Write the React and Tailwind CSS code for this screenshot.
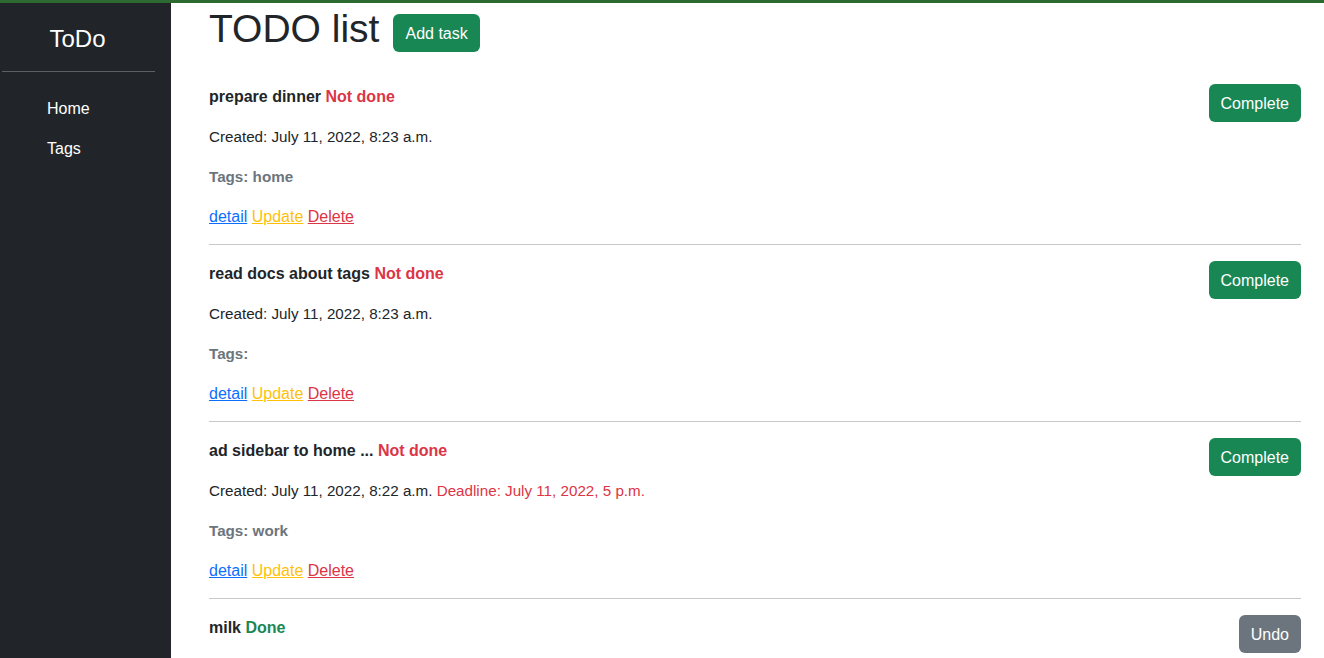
const tasks = [
  {
    name: 'prepare dinner',
    done: false,
    created: 'July 11, 2022, 8:23 a.m.',
    tags: 'home',
  },
  {
    name: 'read docs about tags',
    done: false,
    created: 'July 11, 2022, 8:23 a.m.',
    tags: '',
  },
  {
    name: 'ad sidebar to home ...',
    done: false,
    created: 'July 11, 2022, 8:22 a.m.',
    deadline: 'July 11, 2022, 5 p.m.',
    tags: 'work',
  },
  {
    name: 'milk',
    done: true,
    titleOnly: true,
  },
]

function Sidebar() {
  return (
    <aside className="w-[171px] shrink-0 bg-[#212529] text-white">
      <div className="w-[155px]">
        <div className="pt-[21px] text-center text-[24px] leading-[29px]">ToDo</div>
        <hr className="mt-[18px] ml-[2px] w-[153px] border-0 border-t border-[#5d6063]" />
        <ul className="mt-[25px] pl-[47px] text-[16px] leading-[24px]">
          <li className="h-[40px]">Home</li>
          <li className="h-[40px]">Tags</li>
        </ul>
      </div>
    </aside>
  )
}

function TaskItem({ task }) {
  return (
    <div>
      <div className="flex items-start justify-between">
        <div className="text-[16px] leading-[24px]">
          <p className="relative top-[1px] mb-[16px] font-bold text-[#212529]">
            {task.name}{' '}
            {task.done ? (
              <span className="text-[#198754]">Done</span>
            ) : (
              <span className="text-[#dc3545]">Not done</span>
            )}
          </p>
          {!task.titleOnly && (
            <>
              <p className="relative top-[1px] mb-[16px] text-[15.2px] text-[#212529]">
                Created: {task.created}
                {task.deadline && <span className="text-[#dc3545]"> Deadline: {task.deadline}</span>}
              </p>
              <p className="relative top-[1px] mb-[16px] text-[15.2px] font-bold text-[#6c757d]">
                Tags: {task.tags}
              </p>
              <p className="relative top-[1px] mb-[16px]">
                <a className="text-[#0d6efd] underline">detail</a>{' '}
                <a className="text-[#ffc107] underline">Update</a>{' '}
                <a className="text-[#dc3545] underline">Delete</a>
              </p>
            </>
          )}
        </div>
        {task.done ? (
          <button className="h-[38px] rounded-[6px] bg-[#6c757d] px-[12px] pt-[1px] text-[16px] text-white">Undo</button>
        ) : (
          <button className="h-[38px] rounded-[6px] bg-[#198754] px-[12px] pt-[1px] text-[16px] text-white">Complete</button>
        )}
      </div>
      {!task.titleOnly && <hr className="mb-[16px] border-0 border-t border-[#c8c8c8]" />}
    </div>
  )
}

export default function App() {
  return (
    <div className="flex h-[658px] flex-col overflow-hidden bg-white font-['Liberation_Sans',Arial,sans-serif] text-[#212529]">
      <div className="h-[3px] shrink-0 bg-[#2d6a31]" />
      <div className="flex min-h-0 flex-1">
        <Sidebar />
        <main className="flex-1 pl-[38px] pr-[23px]">
          <div className="flex items-start pt-[2px]">
            <h1 className="text-[39px] leading-[48px] font-normal text-[#212529]">TODO list</h1>
            <button className="ml-[14px] mt-[9px] h-[38px] rounded-[6px] bg-[#198754] px-[12px] pt-[1px] text-[16px] text-white">
              Add task
            </button>
          </div>
          <div className="mt-[31px]">
            {tasks.map((t, i) => (
              <TaskItem key={i} task={t} />
            ))}
          </div>
        </main>
      </div>
    </div>
  )
}
